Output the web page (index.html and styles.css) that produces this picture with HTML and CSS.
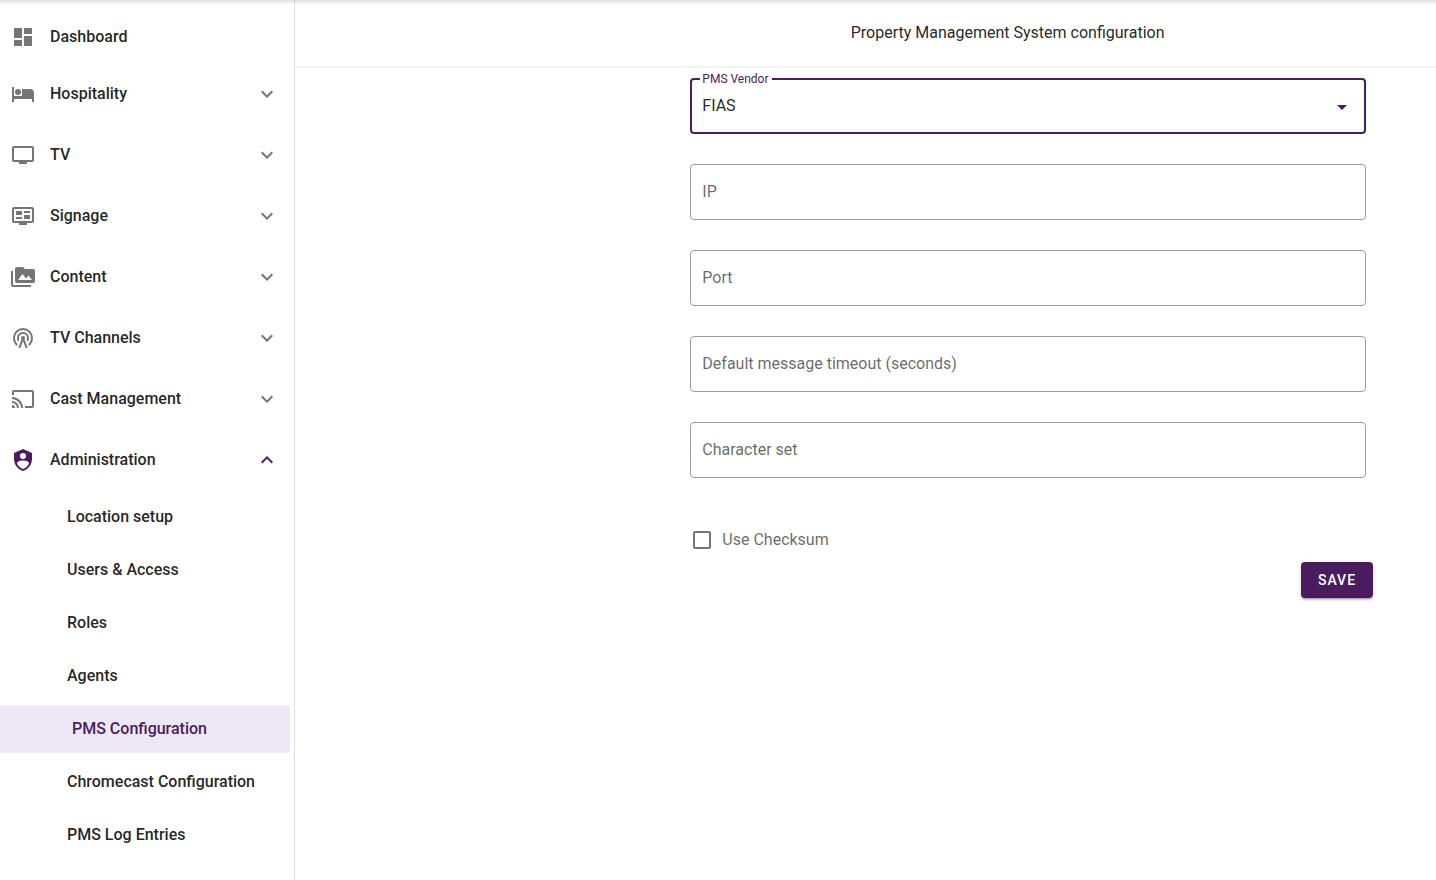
FILE: index.html
```html
<!DOCTYPE html>
<html lang="en">
<head>
<meta charset="utf-8">
<meta name="viewport" content="width=device-width, initial-scale=1">
<title>Property Management System configuration</title>
<link rel="stylesheet" href="styles.css">
</head>
<body>
<svg class="sprite" aria-hidden="true">
  <symbol id="chevron" viewBox="0 0 24 24"><path d="M7.41,8.58L12,13.17L16.59,8.58L18,10L12,16L6,10L7.41,8.58Z"/></symbol>
</svg>
<div class="app">
  <nav class="sidebar" aria-label="Main">
    <a class="nav-item nav-item--link" href="#">
      <svg class="icon" viewBox="0 0 24 24" aria-hidden="true"><path d="M13,3V9H21V3M13,21H21V11H13M3,21H11V15H3M3,13H11V3H3V13Z"/></svg>
      <span class="nav-label">Dashboard</span>
    </a>
    <button class="nav-item" type="button" aria-expanded="false">
      <svg class="icon" viewBox="0 0 24 24" aria-hidden="true"><path d="M19,7H11V14H3V5H1V20H3V17H21V20H23V11A4,4 0 0,0 19,7M7,13A3,3 0 0,0 10,10A3,3 0 0,0 7,7A3,3 0 0,0 4,10A3,3 0 0,0 7,13Z"/></svg>
      <span class="nav-label">Hospitality</span>
      <svg class="icon" aria-hidden="true"><use href="#chevron"/></svg>
    </button>
    <button class="nav-item" type="button" aria-expanded="false">
      <svg class="icon" viewBox="0 0 24 24" aria-hidden="true"><path d="M21,17H3V5H21M21,3H3A2,2 0 0,0 1,5V17A2,2 0 0,0 3,19H8V21H16V19H21A2,2 0 0,0 23,17V5A2,2 0 0,0 21,3Z"/></svg>
      <span class="nav-label">TV</span>
      <svg class="icon" aria-hidden="true"><use href="#chevron"/></svg>
    </button>
    <button class="nav-item" type="button" aria-expanded="false">
      <svg class="icon" viewBox="0 0 24 24" aria-hidden="true"><path d="M21,17V5H3V17H21M21,3A2,2 0 0,1 23,5V17A2,2 0 0,1 21,19H16V21H8V19H3A2,2 0 0,1 1,17V5A2,2 0 0,1 3,3H21M5,7H11V11H5V7M5,13H11V15H5V13M13,7H19V9H13V7M13,11H19V15H13V11Z"/></svg>
      <span class="nav-label">Signage</span>
      <svg class="icon" aria-hidden="true"><use href="#chevron"/></svg>
    </button>
    <button class="nav-item" type="button" aria-expanded="false">
      <svg class="icon" viewBox="0 0 24 24" aria-hidden="true"><path d="M7,15L11.5,9L15,13.5L17.5,10.5L21,15M22,4H14L12,2H6A2,2 0 0,0 4,4V16A2,2 0 0,0 6,18H22A2,2 0 0,0 24,16V6A2,2 0 0,0 22,4M2,6H0V11H0V20A2,2 0 0,0 2,22H20V20H2V6Z"/></svg>
      <span class="nav-label">Content</span>
      <svg class="icon" aria-hidden="true"><use href="#chevron"/></svg>
    </button>
    <button class="nav-item" type="button" aria-expanded="false">
      <svg class="icon" viewBox="0 0 24 24" aria-hidden="true"><path d="M12,10A2,2 0 0,1 14,12C14,12.5 13.82,12.94 13.53,13.29L16.7,22H14.57L12,14.93L9.43,22H7.3L10.47,13.29C10.18,12.94 10,12.5 10,12A2,2 0 0,1 12,10M12,8A4,4 0 0,0 8,12C8,12.5 8.1,13 8.28,13.46L7.4,15.86C6.53,14.81 6,13.47 6,12A6,6 0 0,1 12,6A6,6 0 0,1 18,12C18,13.47 17.47,14.81 16.6,15.86L15.72,13.46C15.9,13 16,12.5 16,12A4,4 0 0,0 12,8M12,4A8,8 0 0,0 4,12C4,14.36 5,16.5 6.64,17.94L5.92,19.94C3.54,18.11 2,15.23 2,12A10,10 0 0,1 12,2A10,10 0 0,1 22,12C22,15.23 20.46,18.11 18.08,19.94L17.36,17.94C19,16.5 20,14.36 20,12A8,8 0 0,0 12,4Z"/></svg>
      <span class="nav-label">TV Channels</span>
      <svg class="icon" aria-hidden="true"><use href="#chevron"/></svg>
    </button>
    <button class="nav-item" type="button" aria-expanded="false">
      <svg class="icon" viewBox="0 0 24 24" aria-hidden="true"><path d="M1,10V12A9,9 0 0,1 10,21H12C12,14.92 7.07,10 1,10M1,14V16A5,5 0 0,1 6,21H8A7,7 0 0,0 1,14M1,18V21H4A3,3 0 0,0 1,18M21,3H3C1.89,3 1,3.89 1,5V8H3V5H21V19H14V21H21A2,2 0 0,0 23,19V5C23,3.89 22.1,3 21,3Z"/></svg>
      <span class="nav-label">Cast Management</span>
      <svg class="icon" aria-hidden="true"><use href="#chevron"/></svg>
    </button>
    <button class="nav-item nav-item--open" type="button" aria-expanded="true">
      <svg class="icon" viewBox="0 0 24 24" aria-hidden="true"><path d="M12,1L3,5V11C3,16.55 6.84,21.74 12,23C17.16,21.74 21,16.55 21,11V5L12,1M12,5A3,3 0 0,1 15,8A3,3 0 0,1 12,11A3,3 0 0,1 9,8A3,3 0 0,1 12,5M17.13,17C15.92,18.85 14.11,20.24 12,20.92C9.89,20.24 8.08,18.85 6.87,17C6.53,16.5 6.24,16 6,15.47C6,13.82 8.71,12.47 12,12.47C15.29,12.47 18,13.79 18,15.47C17.76,16 17.47,16.5 17.13,17Z"/></svg>
      <span class="nav-label">Administration</span>
      <svg class="icon icon--flipped" aria-hidden="true"><use href="#chevron"/></svg>
    </button>
    <a class="sub-item" href="#">Location setup</a>
    <a class="sub-item" href="#">Users &amp; Access</a>
    <a class="sub-item" href="#">Roles</a>
    <a class="sub-item" href="#">Agents</a>
    <a class="sub-item sub-item--active" href="#" aria-current="page">PMS Configuration</a>
    <a class="sub-item" href="#">Chromecast Configuration</a>
    <a class="sub-item" href="#">PMS Log Entries</a>
  </nav>
  <main class="main">
    <header class="page-header">
      <h1 class="page-title">Property Management System configuration</h1>
    </header>
    <form class="form">
      <div class="field field--focused">
        <select class="field-control" id="vendor"><option>FIAS</option></select>
        <label class="field-float" for="vendor">PMS Vendor</label>
        <svg class="icon field-arrow" viewBox="0 0 24 24" aria-hidden="true"><path d="M7,10L12,15L17,10H7Z"/></svg>
      </div>
      <div class="field">
        <input class="field-control" id="ip" type="text">
        <label class="field-label" for="ip">IP</label>
      </div>
      <div class="field">
        <input class="field-control" id="port" type="text">
        <label class="field-label" for="port">Port</label>
      </div>
      <div class="field">
        <input class="field-control" id="timeout" type="text">
        <label class="field-label" for="timeout">Default message timeout (seconds)</label>
      </div>
      <div class="field">
        <input class="field-control" id="charset" type="text">
        <label class="field-label" for="charset">Character set</label>
      </div>
      <div class="check">
        <input class="check-box" id="checksum" type="checkbox">
        <label for="checksum">Use Checksum</label>
      </div>
      <div class="actions">
        <button class="save" type="button">SAVE</button>
      </div>
    </form>
  </main>
</div>
</body>
</html>
```
FILE: styles.css
```css
:root {
  --primary: #4a1c5f;
  --primary-tint: #ede8f6;
  --text: rgba(0, 0, 0, 0.87);
  --muted: rgba(0, 0, 0, 0.6);
  --icon: #757575;
  --line: #e0e0e0;
}

* {
  box-sizing: border-box;
}

body {
  margin: 0;
  background: #fff;
  color: var(--text);
  font: 16px/24px Roboto, "Liberation Sans", sans-serif;
}

button,
input,
select {
  font: inherit;
  color: inherit;
}

.sprite {
  display: none;
}

.app {
  display: flex;
  min-height: 100vh;
}

/* Shadow cast by the toolbar above the page */
.app::before {
  content: "";
  position: absolute;
  top: 0;
  left: 0;
  right: 0;
  height: 5px;
  background: linear-gradient(rgba(0, 0, 0, 0.12), rgba(0, 0, 0, 0));
}

.sidebar {
  display: flex;
  flex-direction: column;
  flex: none;
  gap: 5px;
  width: 295px;
  padding-top: 13px;
  border-right: 1px solid var(--line);
}

.nav-item {
  display: flex;
  align-items: center;
  gap: 15px;
  min-height: 56px;
  padding: 0 15px 0 11px;
  border: 0;
  background: none;
  font-weight: 500;
  text-align: left;
  text-decoration: none;
  color: var(--text);
}

.nav-item--link {
  min-height: 48px;
}

.nav-label {
  flex: 1;
  padding-bottom: 1px;
}

.icon {
  flex: none;
  width: 24px;
  height: 24px;
  fill: var(--icon);
}

.nav-item--open .icon {
  fill: var(--primary);
}

.icon--flipped {
  transform: rotate(180deg);
}

.sub-item {
  display: flex;
  align-items: center;
  min-height: 48px;
  margin-right: 4px;
  padding: 0 0 1px 67px;
  border-radius: 0 4px 4px 0;
  font-weight: 500;
  text-decoration: none;
  color: var(--text);
}

.sub-item--active {
  padding-left: 72px;
  background: var(--primary-tint);
  color: var(--primary);
}

.main {
  flex: 1;
  min-width: 0;
}

.page-header {
  padding: 21px 1px 21px 25%;
  border-bottom: 1px solid #ececec;
  box-shadow: 0 1px 1px rgba(0, 0, 0, 0.03);
}

.page-title {
  margin: 0;
  font-size: 16px;
  font-weight: 400;
  text-align: center;
}

.form {
  display: flex;
  flex-direction: column;
  gap: 30px;
  padding: 11px 70px 0 calc(33.333% + 15px);
}

.field {
  position: relative;
  display: grid;
}

.field-control {
  grid-area: 1 / 1;
  width: 100%;
  height: 56px;
  padding: 0 11px;
  border: 1px solid #9e9e9e;
  border-radius: 4px;
  outline: 0;
  background: #fff;
  appearance: none;
}

.field--focused .field-control {
  padding: 0 10px;
  border: 2px solid var(--primary);
}

.field-label {
  grid-area: 1 / 1;
  align-self: center;
  justify-self: start;
  padding: 0 12px;
  color: var(--muted);
  pointer-events: none;
}

.field-float {
  position: absolute;
  top: -7px;
  left: 10px;
  padding: 0 3px 0 2px;
  background: #fff;
  color: var(--primary);
  font-size: 12px;
  line-height: 16px;
}

.field-arrow {
  position: absolute;
  top: 17px;
  right: 12px;
  fill: var(--primary);
  pointer-events: none;
}

.check {
  display: flex;
  align-items: center;
  gap: 11px;
  padding: 20px 0 0 3px;
  color: var(--muted);
}

.check-box {
  width: 18px;
  height: 18px;
  margin: 0;
  border: 2px solid #757575;
  border-radius: 2px;
  background: #fff;
  appearance: none;
}

.check-box:checked {
  border-color: var(--primary);
  background: var(--primary);
}

.actions {
  display: flex;
  justify-content: flex-end;
  margin: -20px -7px 0 0;
}

.save {
  min-width: 72px;
  height: 36px;
  padding: 0 16px;
  border: 0;
  border-radius: 4px;
  background: var(--primary);
  box-shadow: 0 3px 1px -2px rgba(0, 0, 0, 0.2), 0 2px 2px rgba(0, 0, 0, 0.14), 0 1px 5px rgba(0, 0, 0, 0.12);
  color: #fff;
  font-size: 14px;
  font-weight: 500;
  letter-spacing: 1px;
}
```
